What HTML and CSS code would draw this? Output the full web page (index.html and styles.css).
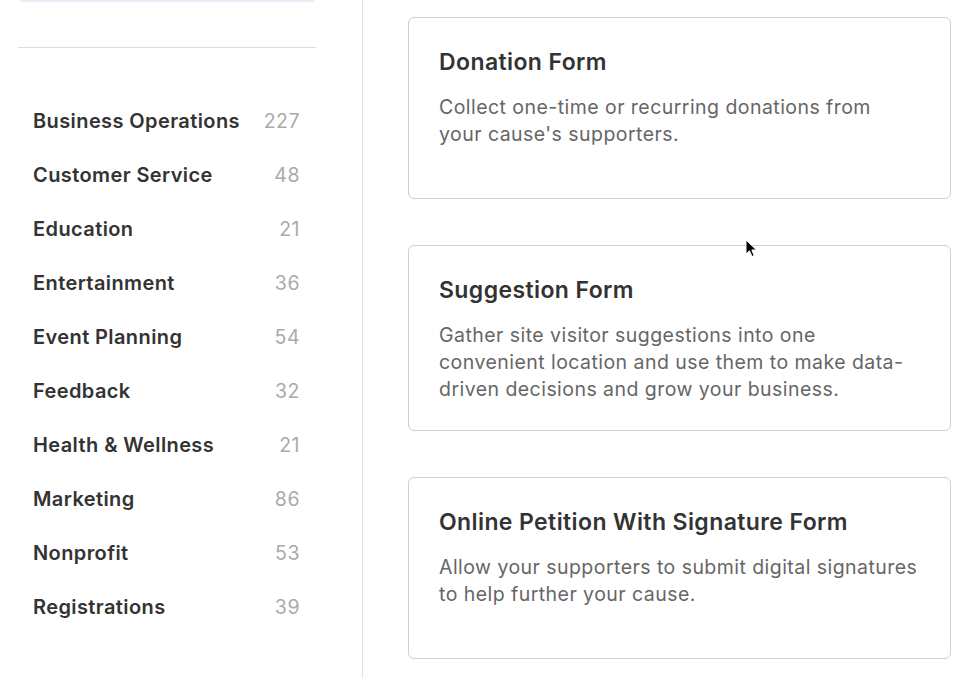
FILE: index.html
```html
<!DOCTYPE html>
<html>
<head>
<meta charset="utf-8">
<link rel="stylesheet" href="styles.css">
</head>
<body>
<div class="page">
  <aside class="sidebar">
    <div class="search-edge"></div>
    <div class="divider"></div>
    <ul class="cats">
      <li><span class="name">Business Operations</span><span class="count">227</span></li>
      <li><span class="name">Customer Service</span><span class="count">48</span></li>
      <li><span class="name">Education</span><span class="count">21</span></li>
      <li><span class="name">Entertainment</span><span class="count">36</span></li>
      <li><span class="name">Event Planning</span><span class="count">54</span></li>
      <li><span class="name">Feedback</span><span class="count">32</span></li>
      <li><span class="name">Health &amp; Wellness</span><span class="count">21</span></li>
      <li><span class="name">Marketing</span><span class="count">86</span></li>
      <li><span class="name">Nonprofit</span><span class="count">53</span></li>
      <li><span class="name">Registrations</span><span class="count">39</span></li>
    </ul>
  </aside>
  <main class="main">
    <div class="card">
      <h2 class="title">Donation Form</h2>
      <p class="desc">Collect one-time or recurring donations from<br>your cause's supporters.</p>
    </div>
    <div class="card">
      <h2 class="title">Suggestion Form</h2>
      <p class="desc">Gather site visitor suggestions into one convenient location and use them to make data-driven decisions and grow your business.</p>
    </div>
    <div class="card">
      <h2 class="title">Online Petition With Signature Form</h2>
      <p class="desc">Allow your supporters to submit digital signatures to help further your cause.</p>
    </div>
  </main>
  <svg class="cursor" width="14" height="20" viewBox="0 0 14 20">
    <path d="M1 1 L1 15 L4.5 11.8 L7 17.5 L9.2 16.5 L6.8 11 L11.5 11 Z" fill="#000" stroke="#fff" stroke-width="1"/>
  </svg>
</div>
</body>
</html>
```
FILE: styles.css
```css
* { box-sizing: border-box; }
html, body { margin: 0; padding: 0; background: #fff; }
body {
  font-family: Inter, "Noto Sans", "Liberation Sans", sans-serif;
  width: 972px;
  height: 678px;
  overflow: hidden;
}
.page {
  position: relative;
  display: flex;
  height: 678px;
}
.sidebar {
  width: 363px;
  flex: none;
  border-right: 1px solid #e3e3e3;
  padding: 0 46px 0 18px;
}
.search-edge {
  height: 2px;
  margin: 0 1px 0 2px;
  background: #e6eefa;
  border-radius: 0 0 4px 4px;
}
.divider {
  margin-top: 45px;
  height: 1px;
  background: #dcdcdc;
}
.cats {
  list-style: none;
  margin: 0;
  padding: 46px 16px 0 15px;
}
.cats li {
  display: flex;
  justify-content: space-between;
  align-items: center;
  height: 54px;
}
.name {
  font-size: 20px;
  font-weight: 600;
  letter-spacing: 0.4px;
  color: #333;
}
.count {
  font-size: 19.5px;
  letter-spacing: 0.5px;
  color: #aaa;
}
.main {
  flex: 1;
  padding: 17px 21px 0 45px;
  display: flex;
  flex-direction: column;
  gap: 46px;
}
.card {
  min-height: 182px;
  border: 1px solid #cfcfcf;
  border-radius: 6px;
  padding: 29px 26px 27px 30px;
  background: #fff;
}
.title {
  margin: 0;
  font-size: 23px;
  line-height: 30px;
  font-weight: 600;
  letter-spacing: 0.4px;
  color: #333;
}
.desc {
  margin: 17px 0 0;
  font-size: 19.5px;
  line-height: 27px;
  letter-spacing: 0.45px;
  color: #666;
}
.cursor {
  position: absolute;
  left: 745px;
  top: 239px;
}
```
